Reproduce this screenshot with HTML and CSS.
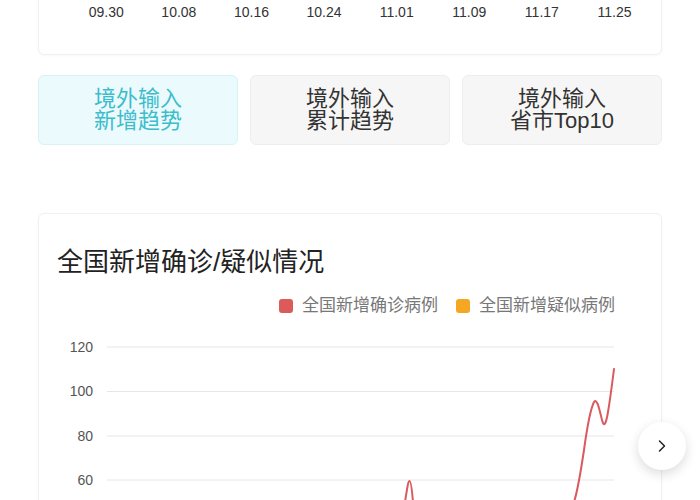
FILE: index.html
```html
<!DOCTYPE html>
<html lang="zh-CN">
<head>
    <meta charset="UTF-8">
    <meta name="viewport" content="width=device-width, initial-scale=1.0">
    <title>疫情趋势</title>
    <link rel="stylesheet" href="styles.css">
</head>
<body>
    <div class="page">

        <!-- 上一个图表的横轴 -->
        <div class="card top-card">
            <div class="x-labels">
                <span>09.30</span>
                <span>10.08</span>
                <span>10.16</span>
                <span>10.24</span>
                <span>11.01</span>
                <span>11.09</span>
                <span>11.17</span>
                <span>11.25</span>
            </div>
        </div>

        <!-- 切换按钮 -->
        <div class="tabs">
            <button class="tab active">境外输入<br>新增趋势</button>
            <button class="tab">境外输入<br>累计趋势</button>
            <button class="tab">境外输入<br>省市Top10</button>
        </div>

        <!-- 全国新增确诊/疑似 -->
        <div class="card chart-card">
            <h2 class="chart-title">全国新增确诊/疑似情况</h2>
            <div class="legend">
                <span class="legend-item"><i class="dot red"></i>全国新增确诊病例</span>
                <span class="legend-item"><i class="dot orange"></i>全国新增疑似病例</span>
            </div>
            <svg class="chart" width="624" height="170" viewBox="38 330 624 170">
                <g class="grid">
                    <line x1="107" y1="347" x2="614" y2="347"></line>
                    <line x1="107" y1="391.5" x2="614" y2="391.5"></line>
                    <line x1="107" y1="436" x2="614" y2="436"></line>
                    <line x1="107" y1="480" x2="614" y2="480"></line>
                </g>
                <g class="y-labels">
                    <text x="93" y="352">120</text>
                    <text x="93" y="396">100</text>
                    <text x="93" y="441">80</text>
                    <text x="93" y="485">60</text>
                </g>
                <path class="line-red" d="M405 502 C407 490 408 481 409.5 481 C411 481 412 490 413 502"></path>
                <path class="line-red" d="M574 502 C578 490 581 470 584 450 C587 428 590 410 594 402 C597 398 599 408 602 420 C604 428 606 424 608 412 C610 400 612 385 614 369"></path>
            </svg>
            <button class="next-btn">
                <svg width="12" height="16" viewBox="0 0 12 16"><path d="M3.5 3 L8.5 8 L3.5 13" fill="none" stroke="#222" stroke-width="1.5" stroke-linecap="round" stroke-linejoin="round"/></svg>
            </button>
        </div>

    </div>
</body>
</html>
```

FILE: styles.css
```css
/* Estilos generales */
body {
    margin: 0;
    background-color: #fff;
    color: #333;
    font-family: "Liberation Sans", "Noto Sans CJK SC", sans-serif;
    overflow: hidden;
}

.page {
    padding: 0 38px;
}

.card {
    background-color: #fff;
    border: 1px solid #f0f0f0;
    border-radius: 6px;
    box-shadow: 0 1px 3px rgba(0, 0, 0, 0.03);
}

/* tarjeta superior */
.top-card {
    margin-top: -30px;
    height: 83px;
}

.x-labels {
    display: grid;
    grid-template-columns: repeat(8, 72.6px);
    padding: 31px 0 0 31px;
    font-size: 14px;
    line-height: 20px;
    color: #333;
}

.x-labels span {
    text-align: center;
}

/* botones */
.tabs {
    display: grid;
    grid-template-columns: repeat(3, 1fr);
    gap: 12px;
    margin-top: 20px;
}

.tab {
    height: 70px;
    padding: 0;
    border: 1px solid #eeeeee;
    border-radius: 6px;
    background-color: #f6f6f6;
    color: #333;
    font-family: "Liberation Sans", "Noto Sans CJK SC", sans-serif;
    font-size: 22px;
    line-height: 22px;
    cursor: pointer;
}

.tab.active {
    background-color: #ebfafc;
    border-color: #d8f3f6;
    color: #3dbdcc;
}

/* grafico */
.chart-card {
    position: relative;
    margin-top: 68px;
    min-height: 400px;
}

.chart-title {
    margin: 0;
    padding: 34px 0 0 18px;
    font-size: 26px;
    line-height: 28px;
    font-weight: normal;
    color: #222;
}

.legend {
    display: flex;
    justify-content: flex-end;
    gap: 18px;
    margin-top: 20px;
    padding-right: 46px;
    font-size: 17px;
    line-height: 20px;
    color: #777;
}

.legend-item {
    display: flex;
    align-items: center;
    gap: 9px;
}

.dot {
    display: inline-block;
    width: 14px;
    height: 14px;
    border-radius: 3px;
}

.dot.red {
    background-color: #dd5a5a;
}

.dot.orange {
    background-color: #f5a623;
}

.chart {
    display: block;
    margin-top: 14px;
    margin-left: -1px;
}

.grid line {
    stroke: #e6e6e6;
    stroke-width: 1;
}

.y-labels text {
    font-family: "Liberation Sans", sans-serif;
    font-size: 14px;
    fill: #555;
    text-anchor: end;
}

.line-red {
    fill: none;
    stroke: #d95a5f;
    stroke-width: 2;
    stroke-linecap: round;
}

.next-btn {
    position: absolute;
    top: 208px;
    right: -25px;
    width: 48px;
    height: 48px;
    padding: 0;
    border: none;
    border-radius: 50%;
    background-color: #fff;
    box-shadow: 0 4px 12px rgba(0, 0, 0, 0.14);
    display: flex;
    align-items: center;
    justify-content: center;
    cursor: pointer;
}
```
